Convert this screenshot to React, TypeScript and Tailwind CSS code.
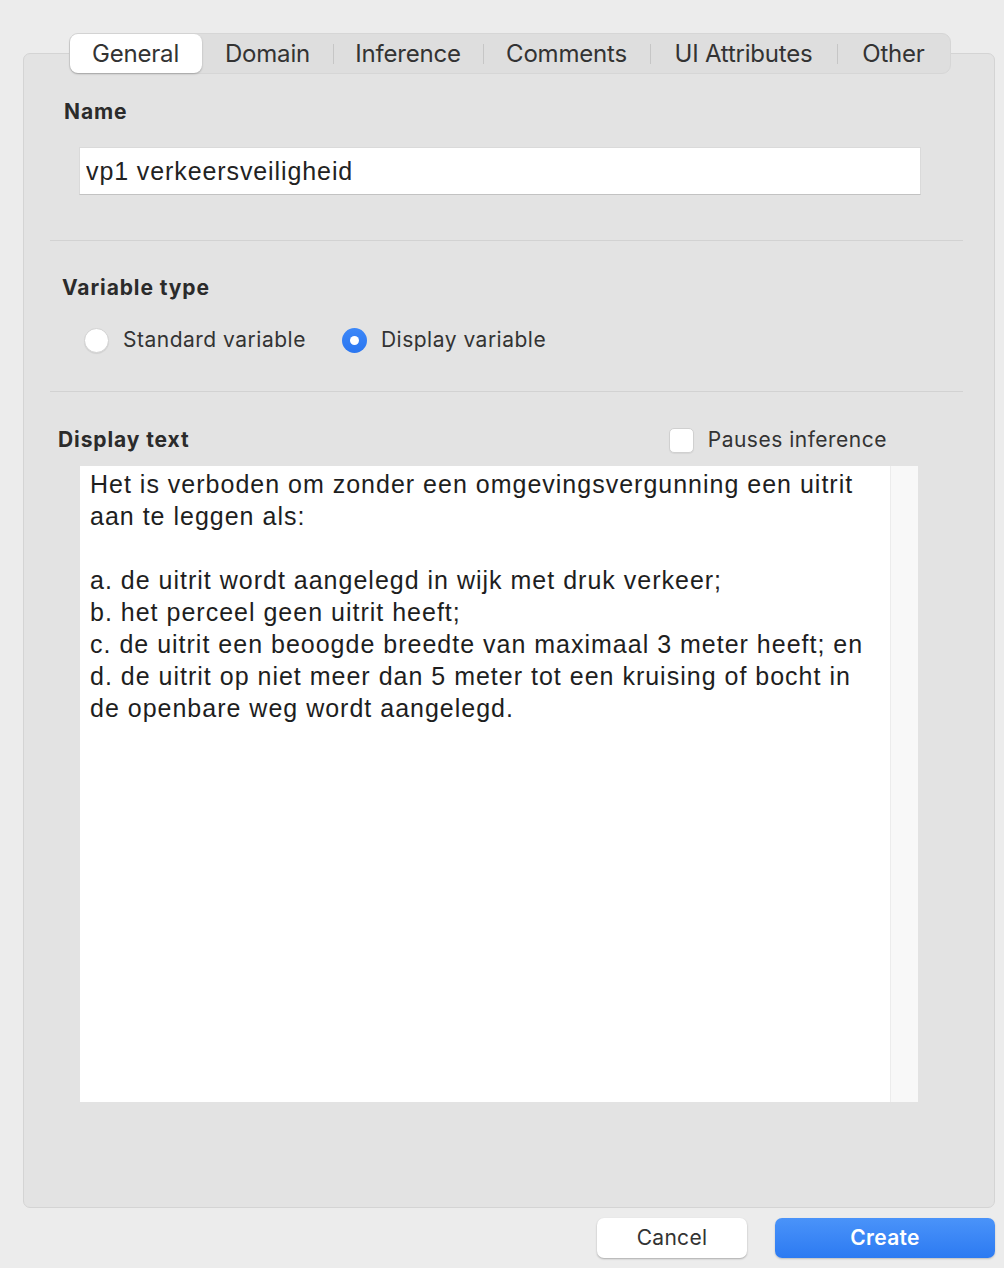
import { useState } from "react";

const TABS = [
  { label: "General", w: "w-[132px]" },
  { label: "Domain", w: "w-[130px]" },
  { label: "Inference", w: "w-[149px]" },
  { label: "Comments", w: "w-[166px]" },
  { label: "UI Attributes", w: "w-[186px]" },
  { label: "Other", w: "w-[112px]" },
];

const DISPLAY_TEXT = `Het is verboden om zonder een omgevingsvergunning een uitrit aan te leggen als:

a. de uitrit wordt aangelegd in wijk met druk verkeer;
b. het perceel geen uitrit heeft;
c. de uitrit een beoogde breedte van maximaal 3 meter heeft; en
d. de uitrit op niet meer dan 5 meter tot een kruising of bocht in de openbare weg wordt aangelegd.`;

export default function App() {
  const [tab, setTab] = useState("General");
  const [kind, setKind] = useState<"standard" | "display">("display");
  const [pauses, setPauses] = useState(false);
  const [name, setName] = useState("vp1 verkeersveiligheid");
  const [text, setText] = useState(DISPLAY_TEXT);

  return (
    <div className="w-[1004px] h-[1268px] bg-[#ececec] pt-[53px] pl-[23px] pr-[9px] font-['Inter',sans-serif] text-[#262626]">
      {/* panel */}
      <div className="h-[1155px] rounded-[7px] border border-[#d4d4d4] bg-[#e3e3e3] flex flex-col">
        {/* segmented tabs sitting on top border */}
        <div className="-mt-[21px] self-center ml-[1px] flex h-[41px] items-center rounded-[9px] border border-[#d6d6d6] bg-[#dedede]">
          {TABS.map((t, i) => {
            const active = t.label === tab;
            const prevActive = i > 0 && TABS[i - 1].label === tab;
            return (
              <div key={t.label} className="flex h-full items-center">
                {i > 0 && (
                  <div
                    className={`h-[20px] w-px ${
                      active || prevActive ? "bg-transparent" : "bg-[#c6c6c6]"
                    }`}
                  />
                )}
                <button
                  onClick={() => setTab(t.label)}
                  className={`${t.w} h-[39px] text-[24px] tracking-[-0.2px] text-[#333] ${
                    active
                      ? "rounded-[8px] bg-white shadow-[0_1px_2px_rgba(0,0,0,0.25)]"
                      : ""
                  }`}
                >
                  {t.label}
                </button>
              </div>
            );
          })}
        </div>

        {/* name */}
        <div className="mt-[26px] ml-[40px] text-[21px] leading-[24px] font-bold text-[#2b2b2b] tracking-[0.9px]">
          Name
        </div>
        <input
          value={name}
          onChange={(e) => setName(e.target.value)}
          className="mt-[23px] ml-[55px] w-[842px] h-[48px] bg-white border border-[#dadada] border-b-[#c2c2c2] px-[6px] text-[25px] tracking-[0.9px] text-[#222] font-['Liberation_Sans',Arial,sans-serif] outline-none"
        />

        <div className="mt-[45px] ml-[26px] w-[913px] h-px bg-[#d2d2d2]" />

        {/* variable type */}
        <div className="mt-[35px] ml-[38px] text-[21px] leading-[24px] font-bold text-[#2b2b2b] tracking-[0.9px]">
          Variable type
        </div>
        <div className="mt-[26px] ml-[60px] flex h-[28px] items-center">
          <Radio
            checked={kind === "standard"}
            onClick={() => setKind("standard")}
            label="Standard variable"
          />
          <div className="w-[36px]" />
          <Radio
            checked={kind === "display"}
            onClick={() => setKind("display")}
            label="Display variable"
          />
        </div>

        <div className="mt-[37px] ml-[26px] w-[913px] h-px bg-[#d2d2d2]" />

        {/* display text */}
        <div className="mt-[34px] ml-[34px] flex h-[28px] w-[829px] items-center justify-between">
          <div className="text-[21px] leading-[24px] font-bold text-[#2b2b2b] tracking-[0.9px]">
            Display text
          </div>
          <label className="flex items-center gap-[14px] cursor-pointer">
            <span
              onClick={() => setPauses(!pauses)}
              className={`grid h-[25px] w-[25px] place-items-center rounded-[5px] border ${
                pauses ? "border-[#2f7cf6] bg-[#2f7cf6]" : "border-[#d0d0d0] bg-white"
              } shadow-[0_1px_1px_rgba(0,0,0,0.06)]`}
            >
              {pauses && (
                <svg width="14" height="14" viewBox="0 0 14 14" fill="none">
                  <path d="M2.5 7.5l3 3 6-7" stroke="white" strokeWidth="2" strokeLinecap="round" strokeLinejoin="round" />
                </svg>
              )}
            </span>
            <span className="text-[21px] text-[#333] tracking-[0.5px]">Pauses inference</span>
          </label>
        </div>

        <div className="mt-[12px] ml-[56px] flex h-[636px] w-[838px] bg-white">
          <textarea
            value={text}
            onChange={(e) => setText(e.target.value)}
            className="h-full flex-1 resize-none pl-[10px] pr-[4px] pt-[2px] text-[25px] leading-[32px] tracking-[1px] text-[#1e1e1e] font-['Liberation_Sans',Arial,sans-serif] outline-none overflow-hidden"
          />
          <div className="h-full w-[28px] border-l border-[#ececec] bg-[#f8f8f8]" />
        </div>
      </div>

      {/* buttons */}
      <div className="mt-[10px] flex justify-end gap-[28px]">
        <button className="h-[40px] w-[150px] rounded-[7px] bg-white text-[21px] text-[#333] shadow-[0_1px_2px_rgba(0,0,0,0.28)] tracking-[0.3px]">
          Cancel
        </button>
        <button className="h-[40px] w-[220px] rounded-[7px] bg-gradient-to-b from-[#4a93f9] to-[#2c7af2] text-[21px] font-semibold text-white shadow-[0_1px_2px_rgba(0,0,0,0.2)] tracking-[0.3px]">
          Create
        </button>
      </div>
    </div>
  );
}

function Radio({
  checked,
  onClick,
  label,
}: {
  checked: boolean;
  onClick: () => void;
  label: string;
}) {
  return (
    <button onClick={onClick} className="flex items-center gap-[14px]">
      {checked ? (
        <span className="grid h-[25px] w-[25px] place-items-center rounded-full bg-gradient-to-b from-[#3c87f8] to-[#2a76f0]">
          <span className="h-[9px] w-[9px] rounded-full bg-white" />
        </span>
      ) : (
        <span className="h-[25px] w-[25px] rounded-full border border-[#d2d2d2] bg-white shadow-[0_1px_1px_rgba(0,0,0,0.08)]" />
      )}
      <span className="text-[21px] text-[#333] tracking-[0.5px]">{label}</span>
    </button>
  );
}
